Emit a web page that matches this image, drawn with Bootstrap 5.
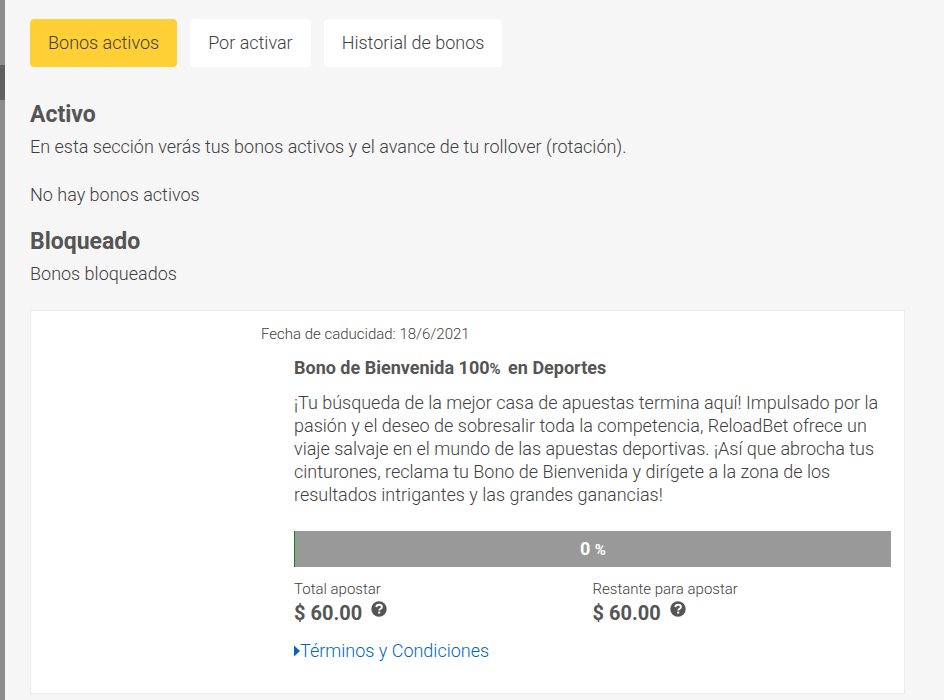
<!DOCTYPE html>
<html lang="es">
<head>
<meta charset="utf-8">
<meta name="viewport" content="width=device-width, initial-scale=1">
<title>Bonos activos</title>
<link href="https://cdn.jsdelivr.net/npm/bootstrap@5.3.0/dist/css/bootstrap.min.css" rel="stylesheet">
<style>
  body { font-family: Roboto, "Liberation Sans", sans-serif; font-size: 18px; font-weight: 300; line-height: 24px; color: #404040; background: #f6f6f6; }
  .edge-strip { width: 5px; background: linear-gradient(#8c8c8c 65px, #606060 65px 100px, #8c8c8c 100px); }
  .page-main { padding: 19px 39px 6px 25px; }
  .bonus-tabs { gap: 13px; margin-bottom: 32px; }
  .bonus-tab { --bs-btn-font-size: 18px; --bs-btn-font-weight: 300; --bs-btn-line-height: 24px; --bs-btn-padding-x: 17px; --bs-btn-padding-y: 11px; --bs-btn-border-radius: 4px; --bs-btn-color: #404040; --bs-btn-bg: #fff; --bs-btn-border-color: #fff; --bs-btn-hover-color: #404040; --bs-btn-hover-bg: #fff; --bs-btn-active-color: #404040; --bs-btn-active-bg: #ffcf36; --bs-btn-active-border-color: #ffcf36; }
  .active-section { margin-bottom: 19px; }
  .section-title { font-size: 23px; line-height: 32px; font-weight: 700; color: #555; margin-bottom: 4px; }
  .bonus-card { --bs-card-border-color: #ececec; --bs-card-border-radius: 0; --bs-card-color: #404040; margin-top: 24px; }
  .bonus-content { margin-left: 230px; padding: 13px 13px 30px 0; }
  .small-label { font-size: 15px; line-height: 20px; }
  .bonus-body { margin-left: 33px; }
  .bonus-title { font-size: 18px; line-height: 24px; margin: 12px 0 11px; font-weight: 700; color: #555; }
  .percent-sign { font-size: 15px; line-height: 1; }
  .bonus-text { line-height: 23px; margin-bottom: 25px; }
  .bonus-progress { height: 36px; background: #999; border-left: 1px solid #17801d; }
  .amount { font-size: 20px; line-height: 24px; font-weight: 700; color: #555; gap: 9px; margin-top: 2px; }
  .help-btn { color: #555; }
  .terms-link { color: #0066c0; margin-top: 14px; }
</style>
<script src="https://cdn.jsdelivr.net/npm/bootstrap@5.3.0/dist/js/bootstrap.bundle.min.js"></script>
</head>
<body>
<div class="d-flex min-vh-100">
  <div class="edge-strip flex-shrink-0" aria-hidden="true"></div>
  <main class="page-main flex-grow-1">
    <nav class="bonus-tabs d-flex flex-wrap" aria-label="Bonos">
      <button type="button" class="btn bonus-tab active" aria-current="page">Bonos activos</button>
      <button type="button" class="btn bonus-tab">Por activar</button>
      <button type="button" class="btn bonus-tab">Historial de bonos</button>
    </nav>

    <section class="active-section">
      <h2 class="section-title">Activo</h2>
      <p class="mb-4">En esta sección verás tus bonos activos y el avance de tu rollover (rotación).</p>
      <p class="mb-0">No hay bonos activos</p>
    </section>

    <section>
      <h2 class="section-title">Bloqueado</h2>
      <p class="mb-0">Bonos bloqueados</p>

      <article class="card bonus-card">
        <div class="bonus-content">
          <div class="small-label">Fecha de caducidad: 18/6/2021</div>
          <div class="bonus-body">
            <h3 class="bonus-title">Bono de Bienvenida 100<span class="percent-sign">%&nbsp; </span>en Deportes</h3>
            <p class="bonus-text">¡Tu búsqueda de la mejor casa de apuestas termina aquí! Impulsado por la pasión y el deseo de sobresalir toda la competencia, ReloadBet ofrece un viaje salvaje en el mundo de las apuestas deportivas. ¡Así que abrocha tus cinturones, reclama tu Bono de Bienvenida y dirígete a la zona de los resultados intrigantes y las grandes ganancias!</p>
            <div class="bonus-progress d-flex align-items-center justify-content-center text-white fw-bold" role="progressbar" aria-label="Avance del rollover" aria-valuenow="0" aria-valuemin="0" aria-valuemax="100"><span>0 <span class="percent-sign">%</span></span></div>
            <div class="row g-0 pt-2 mt-1">
              <div class="col-6">
                <div class="small-label">Total apostar</div>
                <div class="amount d-flex align-items-start">$ 60.00
                  <button type="button" class="help-btn btn p-0 border-0 d-flex" aria-label="Ayuda sobre el total"><svg width="16" height="16" viewBox="0 0 16 16" aria-hidden="true"><circle cx="8" cy="8" r="7.7" fill="currentColor"/><path d="M5.2 6.2C5.4 4.5 6.5 3.7 8.1 3.7c1.7 0 2.8.9 2.8 2.2 0 2-2.7 1.8-2.7 3.7" fill="none" stroke="#fff" stroke-width="1.9"/><path d="M7.2 10.6h2v2h-2z" fill="#fff"/></svg></button>
                </div>
              </div>
              <div class="col-6">
                <div class="small-label">Restante para apostar</div>
                <div class="amount d-flex align-items-start">$ 60.00
                  <button type="button" class="help-btn btn p-0 border-0 d-flex" aria-label="Ayuda sobre el restante"><svg width="16" height="16" viewBox="0 0 16 16" aria-hidden="true"><circle cx="8" cy="8" r="7.7" fill="currentColor"/><path d="M5.2 6.2C5.4 4.5 6.5 3.7 8.1 3.7c1.7 0 2.8.9 2.8 2.2 0 2-2.7 1.8-2.7 3.7" fill="none" stroke="#fff" stroke-width="1.9"/><path d="M7.2 10.6h2v2h-2z" fill="#fff"/></svg></button>
                </div>
              </div>
            </div>
            <a href="#" class="terms-link d-inline-flex align-items-center text-decoration-none"><svg width="6" height="12" viewBox="0 0 6 12" aria-hidden="true"><path d="M0 .5 6 6 0 11.500z" fill="currentColor"/></svg>Términos y Condiciones</a>
          </div>
        </div>
      </article>
    </section>
  </main>
</div>
</body>
</html>
